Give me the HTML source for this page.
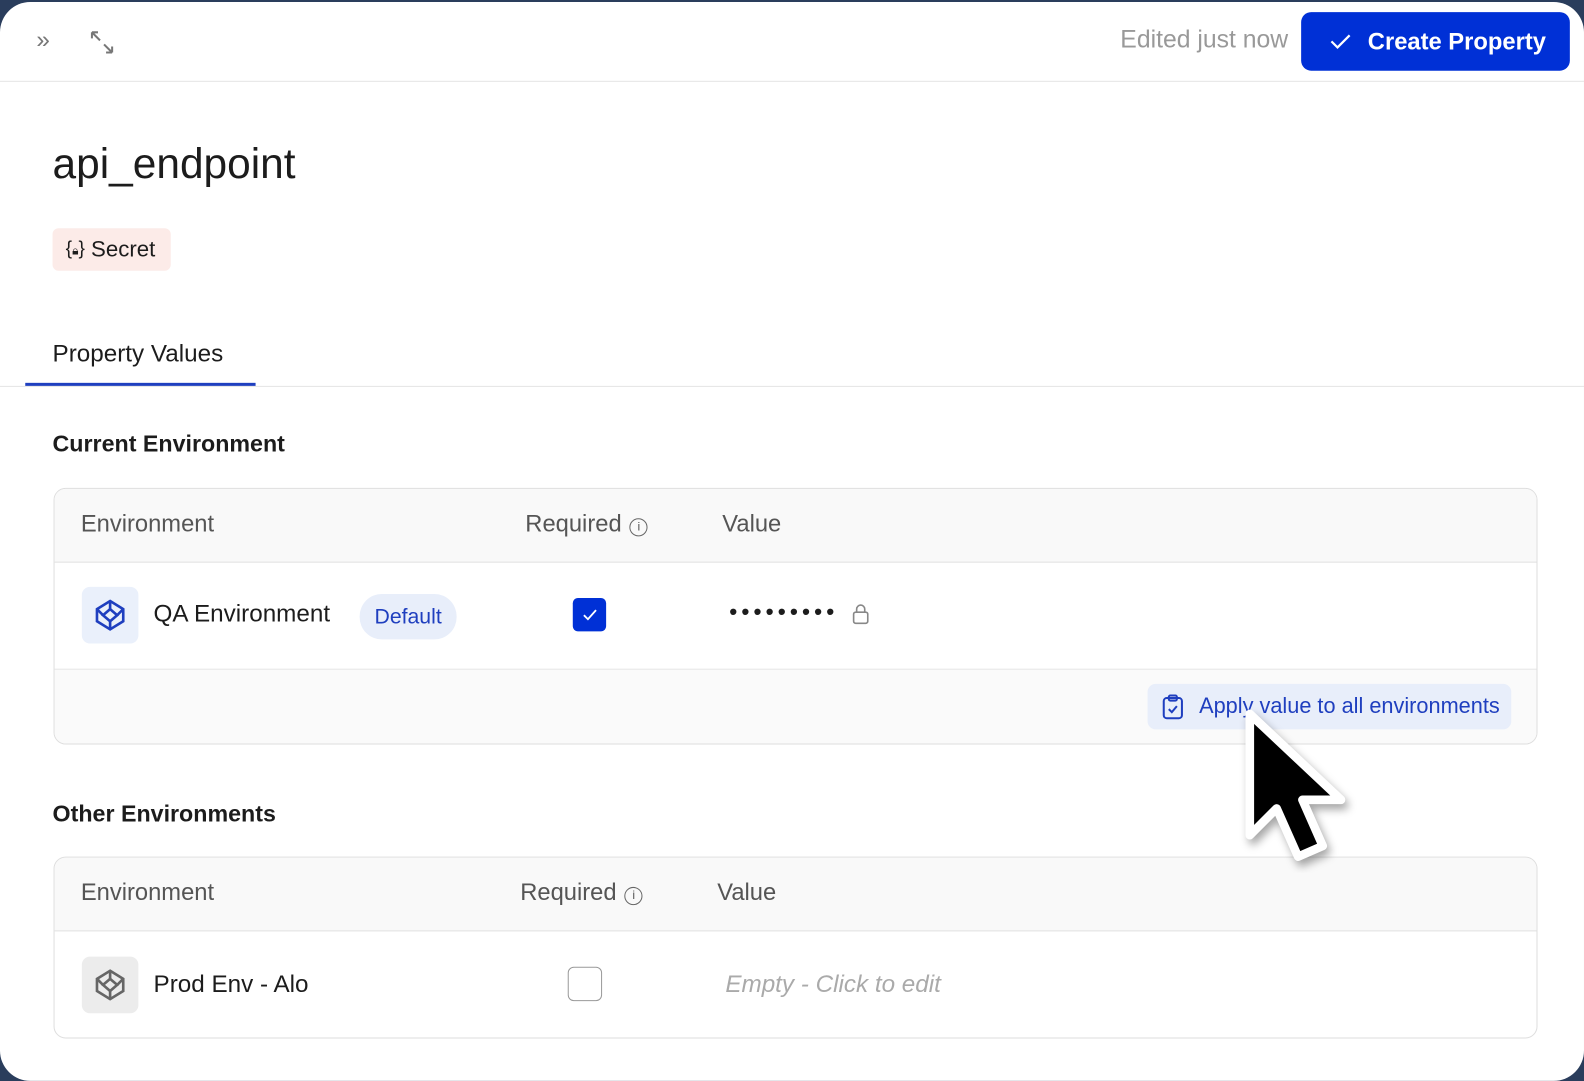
<!DOCTYPE html>
<html><head><meta charset="utf-8"><style>
*{box-sizing:border-box;margin:0;padding:0}
html,body{width:1584px;height:1080px;overflow:hidden;background:#2a3d5c;font-family:"Liberation Sans",sans-serif;color:#1c1c1c}
.win{position:absolute;left:0;top:2px;width:1568px;height:1068px;background:#fff;border-radius:30px;overflow:hidden;transform:scale(1.0102);transform-origin:0 0}
.top{position:absolute;left:0;top:0;width:100%;height:79px;border-bottom:1px solid #e4e4e4}
.abs{position:absolute}
.btn{position:absolute;left:1288px;top:10px;width:266px;height:58px;background:#0030d6;border-radius:10px;color:#fff;font-size:23.5px;font-weight:bold;display:flex;align-items:center}
.t{position:absolute;white-space:nowrap}
.table{position:absolute;left:53px;width:1469px;border:1px solid #dedede;border-radius:12px;overflow:hidden;background:#fff}
.hd{height:73px;background:#f9f9f9;border-bottom:1px solid #e2e2e2;position:relative;font-size:23.5px;color:#555}
.row{position:relative;border-bottom:1px solid #e2e2e2}
.ic{position:absolute;width:56px;height:56px;border-radius:8px;display:flex;align-items:center;justify-content:center}
.inf{display:inline-block;width:18px;height:18px;border:1.5px solid #666;border-radius:50%;font-size:12px;text-align:center;line-height:15px;vertical-align:1px;margin-left:8px}
</style></head><body>
<div class="win">
 <div class="top">
  <div class="t" style="left:36px;top:24px;font-size:24px;color:#777">»</div>
  <svg class="abs" style="left:88px;top:27px" width="26" height="26" viewBox="0 0 26 26" fill="none" stroke="#777" stroke-width="2"><path d="M3 3l8 8M3 3h6M3 3v6M23 23l-8-8M23 23h-6M23 23v-6"/></svg>
  <div class="t" style="left:1109px;top:24px;font-size:24.5px;color:#999">Edited just now</div>
  <div class="btn"><svg style="margin-left:28px" width="22" height="18" viewBox="0 0 22 18" fill="none" stroke="#fff" stroke-width="2.2"><path d="M2 9l6 6L20 3"/></svg><span style="margin-left:16px">Create Property</span></div>
 </div>
 <div class="t" style="left:52px;top:136px;font-size:42px;color:#1c1c1c">api_endpoint</div>
 <div class="abs" style="left:52px;top:224px;width:117px;height:42px;background:#fcebe8;border-radius:6px;font-size:22px;display:flex;align-items:center"><span style="margin-left:13px;font-size:19px">{<span style="font-size:12px">🔒︎</span>}</span><span style="margin-left:6px">Secret</span></div>
 <div class="t" style="left:52px;top:335px;font-size:24px">Property Values</div>
 <div class="abs" style="left:0;top:380px;width:100%;height:1px;background:#e4e4e4"></div>
 <div class="abs" style="left:25px;top:377px;width:228px;height:3px;background:#1f3fbf"></div>
 <div class="t" style="left:52px;top:424px;font-size:23px;font-weight:bold">Current Environment</div>
 <div class="table" style="top:481px;height:254px">
  <div class="hd"><span class="t" style="left:26px;top:21px">Environment</span><span class="t" style="left:466px;top:21px">Required<span class="inf">i</span></span><span class="t" style="left:661px;top:21px">Value</span></div>
  <div class="row" style="height:106px">
   <div class="ic" style="left:27px;top:24px;background:#eaf0fb"><svg width="34" height="34" viewBox="0 0 34 34" fill="none" stroke="#1f3fbf" stroke-width="2.6"><path d="M17 3L30 11v12L17 31 4 23V11z"/><path d="M17 11l7 6-7 6-7-6z"/><path d="M4 11l6 6M30 11l-6 6M17 3v8M17 23v8"/></svg></div>
   <span class="t" style="left:98px;top:37px;font-size:24px">QA Environment</span>
   <div class="abs" style="left:302px;top:31px;width:96px;height:45px;background:#e8eefa;border-radius:22px;color:#1f3fbf;font-size:21px;text-align:center;line-height:45px">Default</div>
   <div class="abs" style="left:513px;top:35px;width:33px;height:33px;background:#0030d6;border-radius:5px"><svg width="33" height="33" viewBox="0 0 33 33" fill="none" stroke="#fff" stroke-width="1.8"><path d="M11 17l4 4 8-9"/></svg></div>
   <span class="t" style="left:668px;top:36px;font-size:22px;letter-spacing:4.3px;font-weight:bold">•••••••••</span>
   <svg class="abs" style="left:789px;top:40px" width="18" height="22" viewBox="0 0 18 22" fill="none" stroke="#888" stroke-width="1.6"><rect x="2" y="9" width="14" height="11" rx="2"/><path d="M5 9V6a4 4 0 0 1 8 0v3"/></svg>
  </div>
  <div style="height:75px;background:#fafafa;position:relative">
   <div class="abs" style="left:1082px;top:14px;width:360px;height:45px;background:#e8eefa;border-radius:8px;color:#1f3fbf;font-size:21.5px;display:flex;align-items:center">
    <svg style="margin-left:14px" width="22" height="26" viewBox="0 0 22 26" fill="none" stroke="#1f3fbf" stroke-width="2"><rect x="2" y="4" width="18" height="20" rx="3"/><rect x="7" y="1.5" width="8" height="5" rx="1.5"/><path d="M7 15l3 3 5-6"/></svg>
    <span style="margin-left:15px">Apply value to all environments</span></div>
  </div>
 </div>
 <div class="t" style="left:52px;top:790px;font-size:23px;font-weight:bold">Other Environments</div>
 <div class="table" style="top:846px;height:180px">
  <div class="hd"><span class="t" style="left:26px;top:21px">Environment</span><span class="t" style="left:461px;top:21px">Required<span class="inf">i</span></span><span class="t" style="left:656px;top:21px">Value</span></div>
  <div class="row" style="height:106px;border:none">
   <div class="ic" style="left:27px;top:25px;background:#ececec"><svg width="34" height="34" viewBox="0 0 34 34" fill="none" stroke="#666" stroke-width="2.6"><path d="M17 3L30 11v12L17 31 4 23V11z"/><path d="M17 11l7 6-7 6-7-6z"/><path d="M4 11l6 6M30 11l-6 6M17 3v8M17 23v8"/></svg></div>
   <span class="t" style="left:98px;top:39px;font-size:24px">Prod Env - Alo</span>
   <div class="abs" style="left:508px;top:35px;width:34px;height:34px;border:1.5px solid #999;border-radius:6px;background:#fff"></div>
   <span class="t" style="left:664px;top:39px;font-size:24px;color:#aaa;font-style:italic">Empty - Click to edit</span>
  </div>
 </div>
 <svg class="abs" style="left:1220px;top:692px" width="130" height="170" viewBox="0 0 120 160"><path d="M15 12L15 125 40 100 60 145 83 135 64 92 100 92z" fill="#000" stroke="#fff" stroke-width="8" stroke-linejoin="round" style="filter:drop-shadow(3px 5px 4px rgba(0,0,0,.35))"/></svg>
</div>
</body></html>
